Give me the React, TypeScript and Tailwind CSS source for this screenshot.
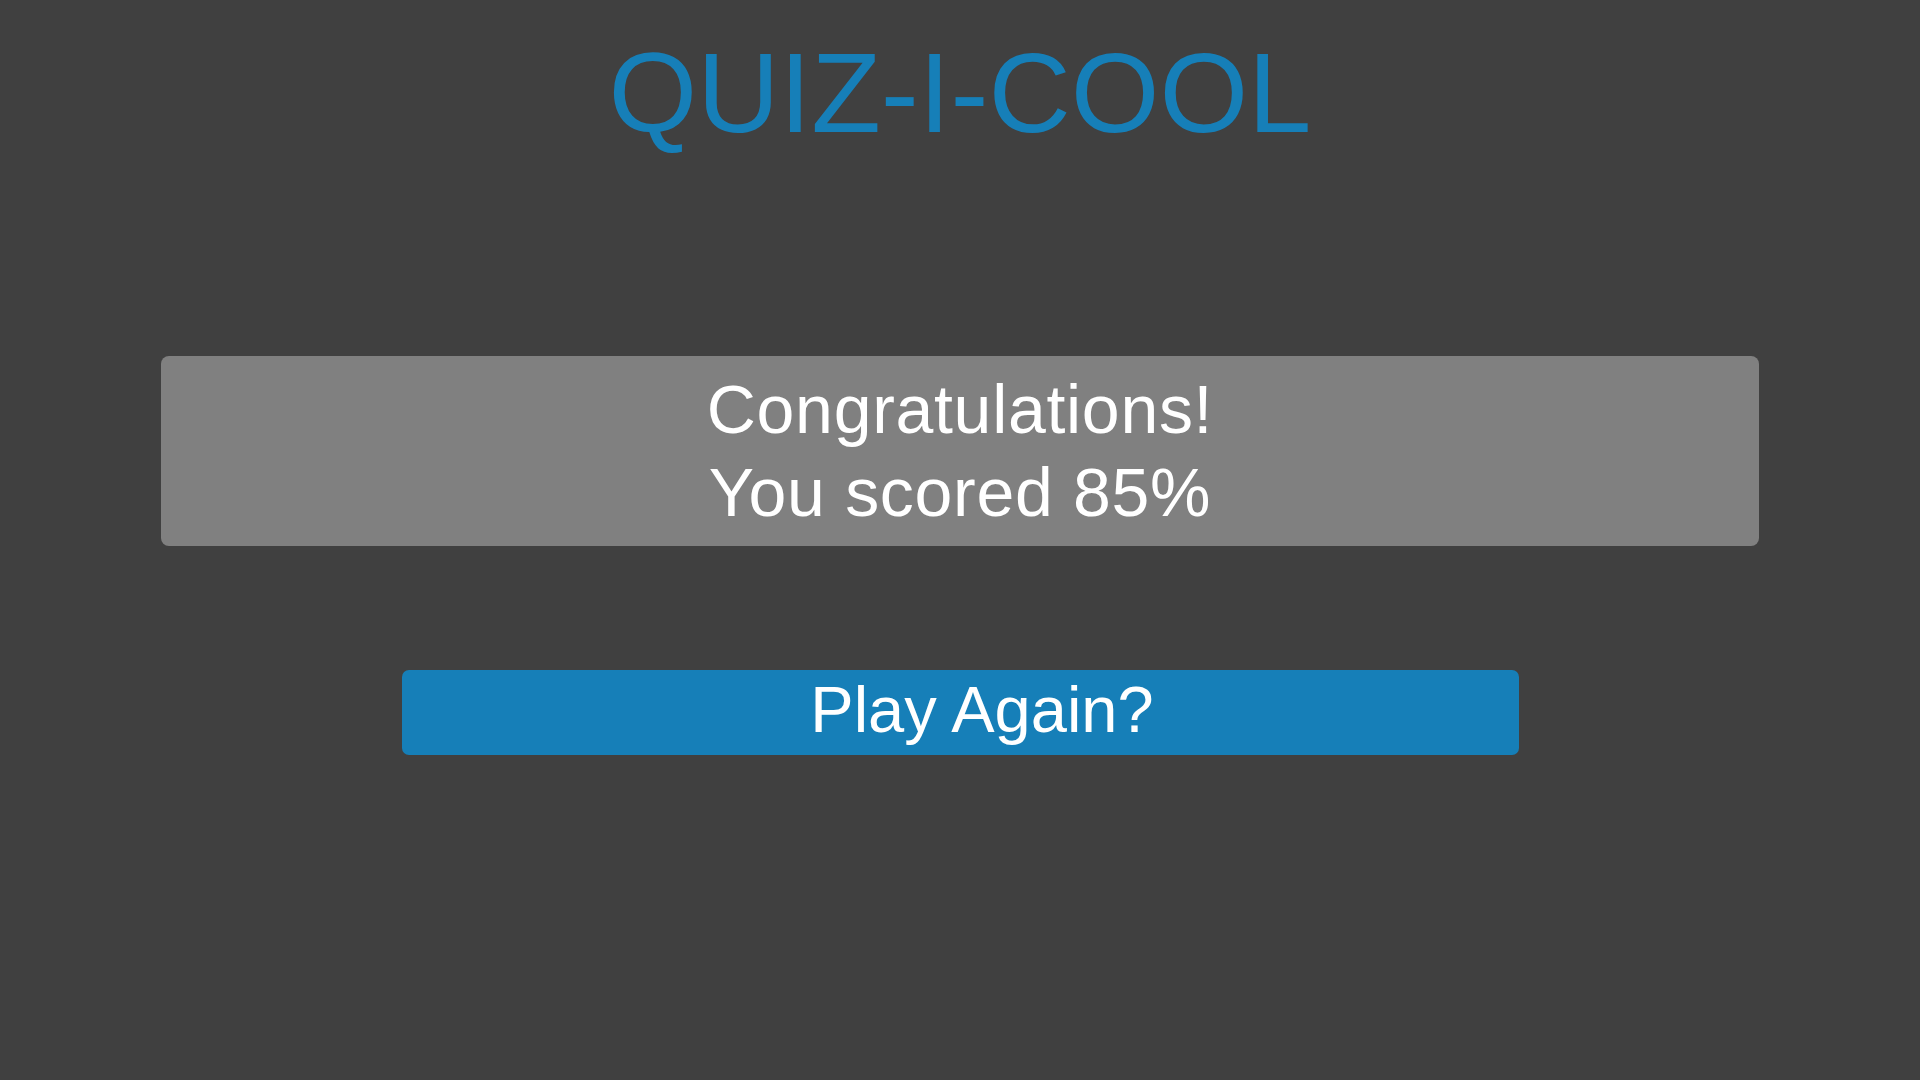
export default function App() {
  const score = 85;

  return (
    <div className="min-h-screen w-full bg-[#404040] flex flex-col items-center font-['Liberation_Sans',Arial,sans-serif]">
      {/* title */}
      <h1 className="mt-[36px] text-[114px] leading-[114px] text-[#167fb8]">QUIZ-I-COOL</h1>

      {/* result card */}
      <div className="mt-[206px] w-[1598px] h-[190px] rounded-[8px] bg-[#808080] flex flex-col justify-center text-center text-white text-[68px] leading-[83px] tracking-[0.7px]">
        <p>Congratulations!</p>
        <p>You scored {score}%</p>
      </div>

      <button className="mt-[124px] w-[1117px] h-[85px] rounded-[7px] bg-[#167fb8] text-white text-[65px] leading-none flex items-center justify-center pl-[44px] pb-[7px]">
        Play Again?
      </button>
    </div>
  );
}
